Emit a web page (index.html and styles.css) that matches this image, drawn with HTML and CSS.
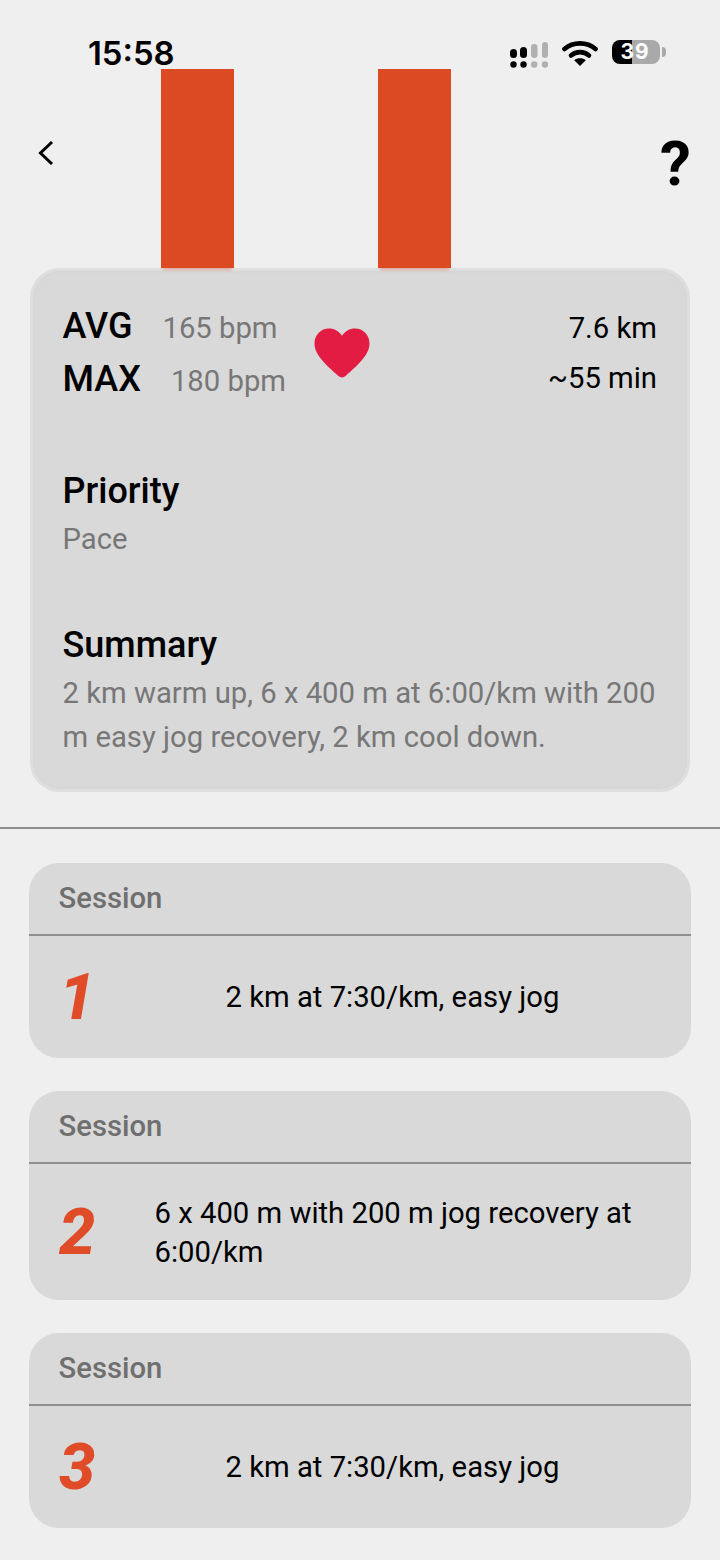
FILE: index.html
```html
<!DOCTYPE html>
<html lang="en">
<head>
  <meta charset="UTF-8">
  <meta name="viewport" content="width=device-width, initial-scale=1.0">
  <title>Workout Details</title>
  <link rel="stylesheet" href="styles.css">
</head>
<body>
  <div class="status-bar">
    <span class="time">15:58</span>
    <div class="status-icons">
      <svg class="signal" width="38" height="26" viewBox="0 0 38 26">
        <rect x="0" y="7" width="7" height="9" rx="3.500" fill="#000"/>
        <rect x="10" y="5" width="7" height="11" rx="3.500" fill="#000"/>
        <rect x="21" y="2" width="6.500" height="14" rx="3.250" fill="#b0b0b0"/>
        <rect x="32" y="0" width="6" height="16" rx="3" fill="#b0b0b0"/>
        <circle cx="3.500" cy="22.500" r="3.200" fill="#000"/>
        <circle cx="13.500" cy="22.500" r="3.200" fill="#000"/>
        <circle cx="24.200" cy="22.500" r="3.200" fill="#b0b0b0"/>
        <circle cx="35" cy="22.500" r="3.200" fill="#b0b0b0"/>
      </svg>
      <svg class="wifi" width="36" height="26" viewBox="0 0 36 26">
        <path d="M2.500 9C11 1.500 25 1.500 33.500 9" fill="none" stroke="#000" stroke-width="4.600" stroke-linecap="round"/>
        <path d="M9 15.500C14 11 22 11 27 15.500" fill="none" stroke="#000" stroke-width="4.600" stroke-linecap="round"/>
        <path d="M18 26L12.200 20.200C15.400 17.600 20.600 17.600 23.800 20.200Z" fill="#000"/>
      </svg>
      <div class="battery">
        <div class="battery-body"><span>39</span></div>
        <div class="battery-cap"></div>
      </div>
    </div>
  </div>

  <div class="hero">
    <svg class="back" width="18" height="26" viewBox="0 0 18 26">
      <path d="M15 2L3.500 13L15 24" fill="none" stroke="#000" stroke-width="3"/>
    </svg>
    <div class="bar bar-left"></div>
    <div class="bar bar-right"></div>
    <span class="help">?</span>
  </div>

  <div class="summary-card">
    <div class="stats">
      <div class="heart-rates">
        <div class="rate rate-avg"><strong>AVG</strong><span>165 bpm</span></div>
        <div class="rate rate-max"><strong>MAX</strong><span>180 bpm</span></div>
      </div>
      <svg class="heart" width="56" height="50" viewBox="0 0 56 50">
        <path d="M28 49.500C26.500 49.500 25 48.600 23.600 47.300C14 38.500 0.500 27.500 0.500 15.500C0.500 6.800 7 0.500 15 0.500C20.500 0.500 25 3.200 28 7.800C31 3.200 35.500 0.500 41 0.500C49 0.500 55.500 6.800 55.500 15.500C55.500 27.500 42 38.500 32.400 47.300C31 48.600 29.500 49.500 28 49.500Z" fill="#e31c44"/>
      </svg>
      <div class="totals">
        <div>7.6 km</div>
        <div>~55 min</div>
      </div>
    </div>
    <h2 class="priority-title">Priority</h2>
    <p class="muted">Pace</p>
    <h2 class="summary-title">Summary</h2>
    <p class="muted summary-text">2 km warm up, 6 x 400 m at 6:00/km with 200 m easy jog recovery, 2 km cool down.</p>
  </div>

  <hr class="divider">

  <div class="sessions">
    <div class="session">
      <div class="session-head">Session</div>
      <div class="session-body">
        <span class="session-num">1</span>
        <p class="session-text centered">2 km at 7:30/km, easy jog</p>
      </div>
    </div>
    <div class="session">
      <div class="session-head">Session</div>
      <div class="session-body tall">
        <span class="session-num">2</span>
        <p class="session-text">6 x 400 m with 200 m jog recovery at 6:00/km</p>
      </div>
    </div>
    <div class="session">
      <div class="session-head">Session</div>
      <div class="session-body">
        <span class="session-num">3</span>
        <p class="session-text centered">2 km at 7:30/km, easy jog</p>
      </div>
    </div>
  </div>
</body>
</html>
```

FILE: styles.css
```css
html, body {
  margin: 0;
  padding: 0;
}

body {
  width: 720px;
  height: 1560px;
  overflow: hidden;
  background-color: #efefef;
  font-family: Roboto, "Liberation Sans", sans-serif;
  color: #000;
}

h2, p {
  margin: 0;
}

.status-bar {
  height: 69px;
  display: flex;
  justify-content: space-between;
  box-sizing: border-box;
  padding: 34px 54px 0 88px;
}

.time {
  font-family: Inter, Roboto, sans-serif;
  font-size: 32.800px;
  font-weight: 600;
  line-height: 38px;
}

.status-icons {
  display: flex;
  align-items: flex-start;
  padding-top: 6px;
}

.signal {
  margin-right: 14px;
  margin-top: 2px;
}

.wifi {
  margin-right: 14px;
}

.battery {
  display: flex;
  align-items: center;
}

.battery-body {
  width: 48px;
  height: 24px;
  border-radius: 8px;
  background: linear-gradient(to right, #000 0, #000 42%, #a9a9a9 42%, #a9a9a9 100%);
  display: flex;
  align-items: center;
  justify-content: center;
}

.battery-body span {
  color: #fff;
  font-family: Inter, Roboto, sans-serif;
  font-size: 21px;
  font-weight: 700;
  line-height: 24px;
  letter-spacing: 1px;
  margin-right: 2px;
}

.battery-cap {
  width: 4px;
  height: 10px;
  margin-left: 2px;
  border-radius: 0 5px 5px 0;
  background-color: #a9a9a9;
}

.hero {
  height: 199px;
  display: flex;
  align-items: flex-start;
  position: relative;
  z-index: 1;
}

.back {
  margin: 71px 0 0 37px;
}

.bar {
  width: 73px;
  height: 199px;
  background-color: #dc4a24;
  box-shadow: 0 4px 3px -2px rgba(221, 74, 36, 0.35);
}

.bar-left {
  margin-left: 106px;
}

.bar-right {
  margin-left: 144px;
}

.help {
  margin-left: 209px;
  margin-top: 59px;
  font-size: 62px;
  font-weight: 700;
  line-height: 72px;
}

.summary-card {
  box-sizing: border-box;
  width: 660px;
  height: 524px;
  margin: 0 0 0 30px;
  padding: 30px 30px 0 29.500px;
  background-color: #d9d9d9;
  border: 3px solid #dedede;
  border-radius: 30px;
  box-shadow: inset 0 0 4px #d4d4d4;
}

.stats {
  display: flex;
  height: 148px;
}

.heart-rates {
  width: 251.500px;
}

.rate {
  display: flex;
  align-items: baseline;
  height: 53px;
}

.rate strong {
  font-size: 36px;
  font-weight: 500;
  line-height: 50px;
}

.rate span {
  font-size: 29.250px;
  color: #777;
}

.rate-avg span {
  margin-left: 30px;
}

.rate-max span {
  margin-left: 30px;
}

.heart {
  margin-top: 27px;
}

.totals {
  flex: 1;
  margin-top: 2px;
  text-align: right;
  font-size: 29.250px;
  line-height: 50px;
}

.priority-title, .summary-title {
  font-size: 36px;
  font-weight: 500;
  line-height: 44px;
}

.priority-title {
  margin-top: 20px;
}

.summary-title {
  margin-top: 62px;
}

.muted {
  font-size: 29.250px;
  line-height: 44px;
  color: #777;
  margin-top: 4px;
}

.summary-text {
  margin-top: 4px;
  margin-right: -6px;
}

.divider {
  border: none;
  height: 2px;
  background-color: #8f8f8f;
  margin: 35px 0 34px 0;
}

.sessions {
  display: flex;
  flex-direction: column;
  gap: 33px;
  margin: 0 29px;
}

.session {
  background-color: #d9d9d9;
  border-radius: 30px;
  overflow: hidden;
}

.session-head {
  height: 73px;
  box-sizing: border-box;
  padding-left: 29.500px;
  border-bottom: 2px solid #8f8f8f;
  font-size: 29.250px;
  font-weight: 500;
  line-height: 70px;
  color: #6f6f6f;
}

.session-body {
  height: 122px;
  display: flex;
  align-items: center;
  padding-left: 30px;
}

.session-body.tall {
  height: 136px;
}

.session-body.tall .session-text {
  padding-top: 2px;
}

.session-num {
  width: 95.500px;
  flex-shrink: 0;
  font-size: 65px;
  font-weight: 800;
  font-style: italic;
  color: #e04b28;
}

.session-text {
  font-size: 29.250px;
  line-height: 39px;
  padding-right: 40px;
}

.session-text.centered {
  margin-left: 71px;
  padding-right: 0;
}
```
